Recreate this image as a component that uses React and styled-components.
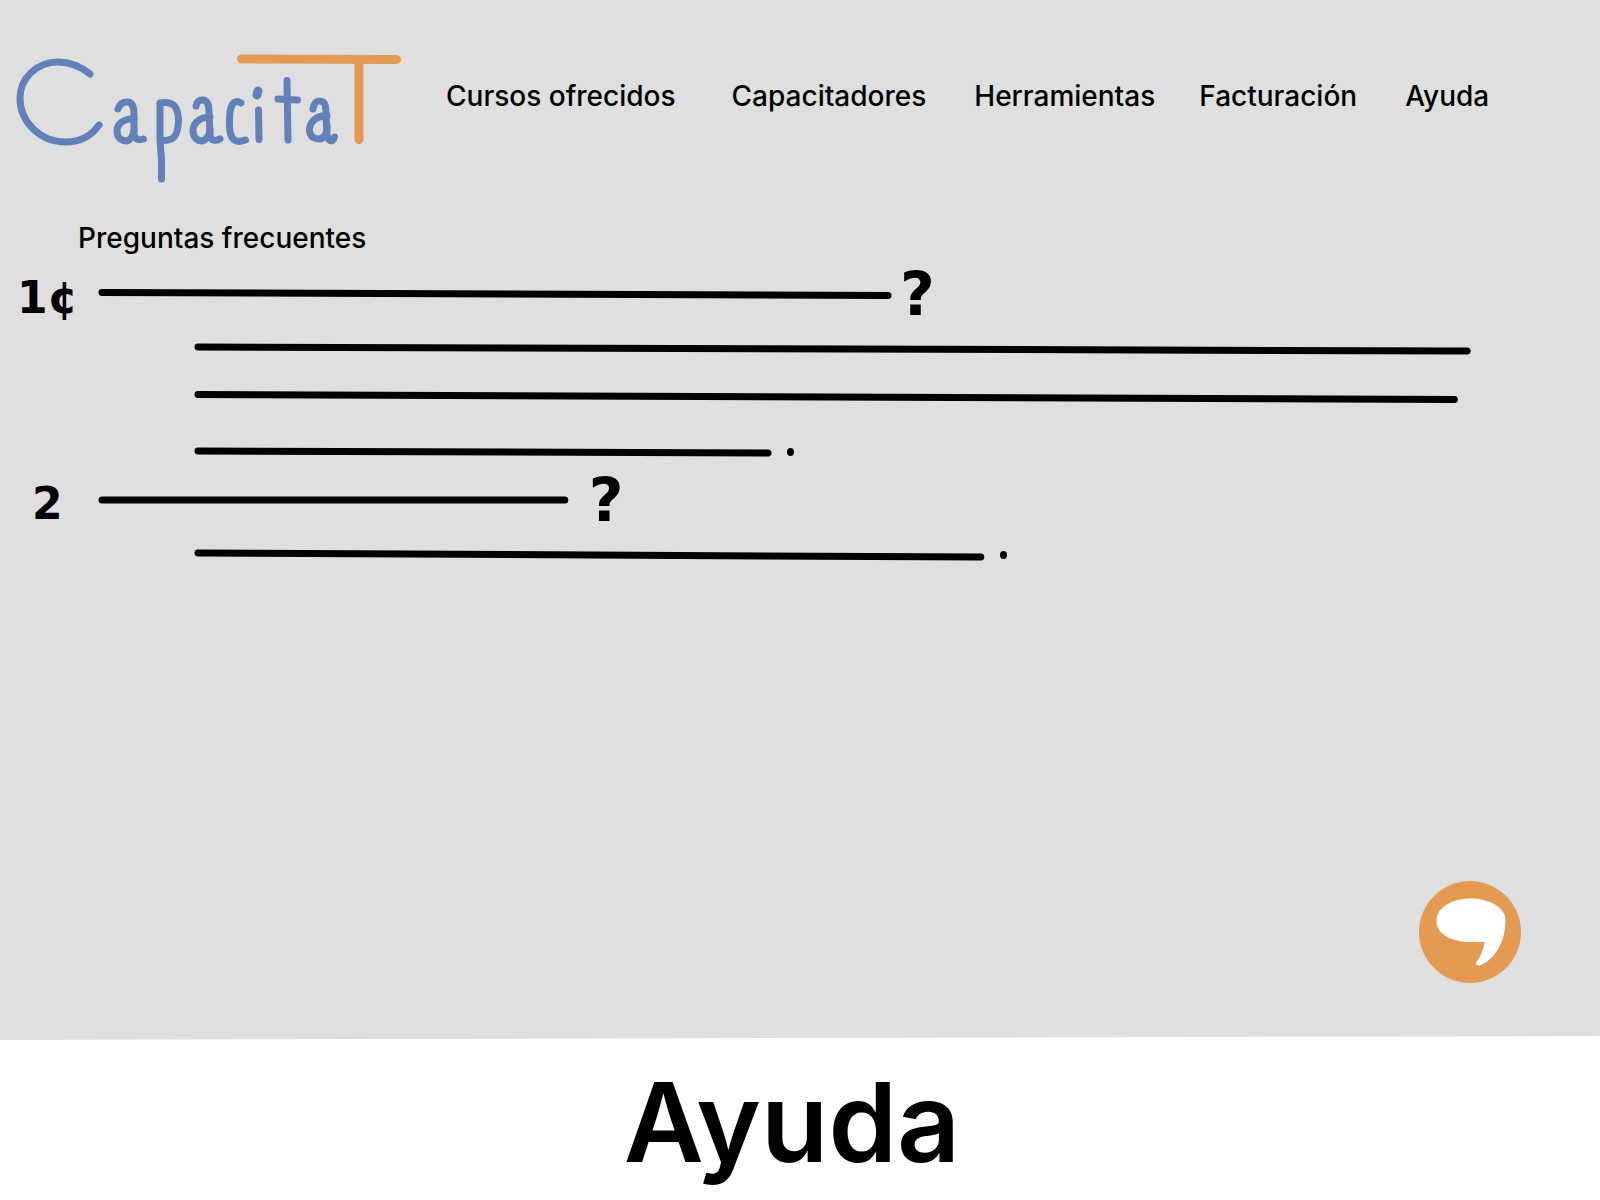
import React from "react";
import styled, { createGlobalStyle } from "styled-components";

const INK = "#000";
const BLUE = "#6480bb";
const ORANGE = "#e39b53";

const GlobalStyle = createGlobalStyle`
  *, *::before, *::after { box-sizing: border-box; }
  body {
    margin: 0;
    background: #fff;
    color: ${INK};
    font-family: Inter, "Liberation Sans", sans-serif;
  }
`;

const Page = styled.div`
  display: flex;
  flex-direction: column;
  min-height: 100vh;
`;

const Screen = styled.div`
  flex: 1;
  display: flex;
  flex-direction: column;
  padding-bottom: 57px;
  background: #dfdfdf;
  clip-path: polygon(0 0, 100% 0, 100% calc(100% - 4px), 0 100%);
`;

const Header = styled.header`
  display: flex;
  align-items: flex-start;
  padding-top: 40px;
`;

const LogoLink = styled.a`
  display: block;
  flex: none;
  width: 408px;
  height: 150px;
`;

const LogoDrawing = styled.svg`
  display: block;
  width: 100%;
  height: 100%;
  fill: none;
  stroke-linecap: round;
  stroke-linejoin: round;
`;

const Nav = styled.nav`
  display: flex;
  padding: 36px 0 0 38px;
`;

const NavLink = styled.a`
  margin-right: ${({ $gap }) => $gap}px;
  color: inherit;
  font-size: 28px;
  font-weight: 500;
  line-height: 40px;
  text-decoration: none;
  white-space: nowrap;
`;

const FaqTitle = styled.h2`
  margin: 28px 0 16px 78px;
  font-size: 28px;
  font-weight: 500;
  line-height: 40px;
`;

const Entry = styled.article`
  & + & { margin-top: 8px; }
`;

const QuestionRow = styled.div`
  display: flex;
  align-items: center;
  height: 40px;
`;

const AnswerRow = styled.div`
  display: flex;
  align-items: center;
  height: 40px;
  margin-top: ${({ $tight }) => ($tight ? 8 : 15)}px;
  padding-left: 12%;
`;

const Numeral = styled.span`
  flex: none;
  width: 96px;
  padding-top: 8px;
  padding-left: ${({ $indent }) => ($indent ? 32 : 17)}px;
  font-family: "DejaVu Sans", sans-serif;
  font-size: 44px;
  font-weight: 700;
  line-height: 40px;
`;

const QuestionMark = styled.span`
  margin-left: ${({ $wide }) => ($wide ? 24 : 12)}px;
  font-family: "DejaVu Sans", sans-serif;
  font-size: 60px;
  font-weight: 700;
  line-height: 40px;
`;

const StrokeSvg = styled.svg`
  flex: none;
  display: block;
  width: ${({ $width }) => $width}vw;
  height: 16px;
  overflow: visible;
  stroke: ${INK};
  stroke-width: 7px;
  stroke-linecap: round;
`;

const Dot = styled.span`
  width: 7px;
  height: 8px;
  margin-left: 19px;
  border-radius: 50%;
  background: ${INK};
`;

const ChatButton = styled.button`
  align-self: flex-end;
  width: 102px;
  height: 102px;
  margin: auto 79px 0 0;
  padding: 0;
  border: 0;
  border-radius: 50%;
  background: ${ORANGE};
  cursor: pointer;

  svg { display: block; }
`;

const Footer = styled.footer`
  padding: 4px 16px 0 0;
  text-align: center;
`;

const PageTitle = styled.h1`
  margin: 0;
  font-size: 110px;
  font-weight: 600;
  line-height: 156px;
`;

function Logo() {
  return (
    <LogoDrawing viewBox="0 40 408 150" role="img" aria-label="CapacitaT">
      <g stroke={BLUE} strokeWidth="7">
        <path d="M90 74C80 66 69 62 58 62C36 62 20 79 20 98C20 122 40 142 66 142C81 142 92 135 99 125" />
        <path d="M118 109C120 103 124 102 127 102C133 102 134 108 134 114L134 133C134 138 137 141 143.5 139" />
        <path d="M134 119C124 118 117 124 117 131C117 139 123 141 127 141C131 140 133 136 134 130" />
        <path d="M161.5 179L161.5 160L160 140L160 103C171 101 178 104 178.5 120C178 136 174 141 163 140.5" />
        <path d="M196 106C197 101 200 100 202.5 100C208 100 209 106 209 112L210 132C210 140 213 142 220 139" />
        <path d="M210 117C200 117 193 123 193 131C193 138 198 141 202 141C206 140 209 136 210 130" />
        <path d="M241 103C233 98 229.5 107 229.5 120C229 136 232 145 245.5 140" />
        <path d="M258.5 110L259 139.5" />
        <path d="M258 91L257 95" strokeWidth="9" />
        <path d="M287 80.5L288 140M278 99L297.5 100" />
        <path d="M313 109C314 103 317 101 319.5 101C326 101 326 107 326 117L327 134C328 142 333 143 334.5 137" />
        <path d="M327 116C318 115 309.5 121 309.5 130C309.5 138 316 139 320 139C325 138 328 131 327 125" />
      </g>
      <g stroke={ORANGE} strokeWidth="9">
        <path d="M241.500 59L396.500 59.5" />
        <path d="M359 62L359 139.5" />
      </g>
    </LogoDrawing>
  );
}

function Stroke({ width, drop }) {
  return (
    <StrokeSvg $width={width} aria-hidden="true">
      <line x1="6" x2="100%" y1={8 - drop / 2} y2={8 + drop / 2} />
    </StrokeSvg>
  );
}

const links = [
  { label: "Cursos ofrecidos", gap: 56 },
  { label: "Capacitadores", gap: 48 },
  { label: "Herramientas", gap: 44 },
  { label: "Facturación", gap: 48 },
  { label: "Ayuda", gap: 0 },
];

const entries = [
  {
    number: "1¢",
    question: { width: 49.5, drop: 3 },
    answer: [
      { width: 79.7, drop: 4 },
      { width: 78.9, drop: 5, tight: true },
      { width: 36, drop: 2, end: true },
    ],
  },
  {
    number: "2",
    indent: true,
    question: { width: 29.3, drop: 0 },
    answer: [{ width: 49.3, drop: 4, end: true }],
  },
];

export default function App() {
  return (
    <Page>
      <GlobalStyle />
      <Screen>
        <Header>
          <LogoLink href="#inicio"><Logo /></LogoLink>
          <Nav>
            {links.map(({ label, gap }) => (
              <NavLink key={label} href="#" $gap={gap}>{label}</NavLink>
            ))}
          </Nav>
        </Header>
        <main>
          <FaqTitle>Preguntas frecuentes</FaqTitle>
          {entries.map(({ number, indent, question, answer }) => (
            <Entry key={number}>
              <QuestionRow>
                <Numeral $indent={indent}>{number}</Numeral>
                <Stroke {...question} />
                <QuestionMark $wide={indent}>?</QuestionMark>
              </QuestionRow>
              {answer.map(({ width, drop, tight, end }) => (
                <AnswerRow key={width} $tight={tight}>
                  <Stroke width={width} drop={drop} />
                  {end && <Dot />}
                </AnswerRow>
              ))}
            </Entry>
          ))}
        </main>
        <ChatButton type="button" aria-label="Chat">
          <svg viewBox="19.5 20 102 102" width="102" height="102">
            <path
              fill="#fff"
              d="M37 60C37 46 53 37.500 71 37.500C91 37.500 106 48 106 58C106 82 95 99 80 104.500C77 105 76 103 77 101C82 94 84 88 85 80.500C80 81.500 76 81 71 81C52 81 37 73 37 60Z"
            />
          </svg>
        </ChatButton>
      </Screen>
      <Footer>
        <PageTitle>Ayuda</PageTitle>
      </Footer>
    </Page>
  );
}
